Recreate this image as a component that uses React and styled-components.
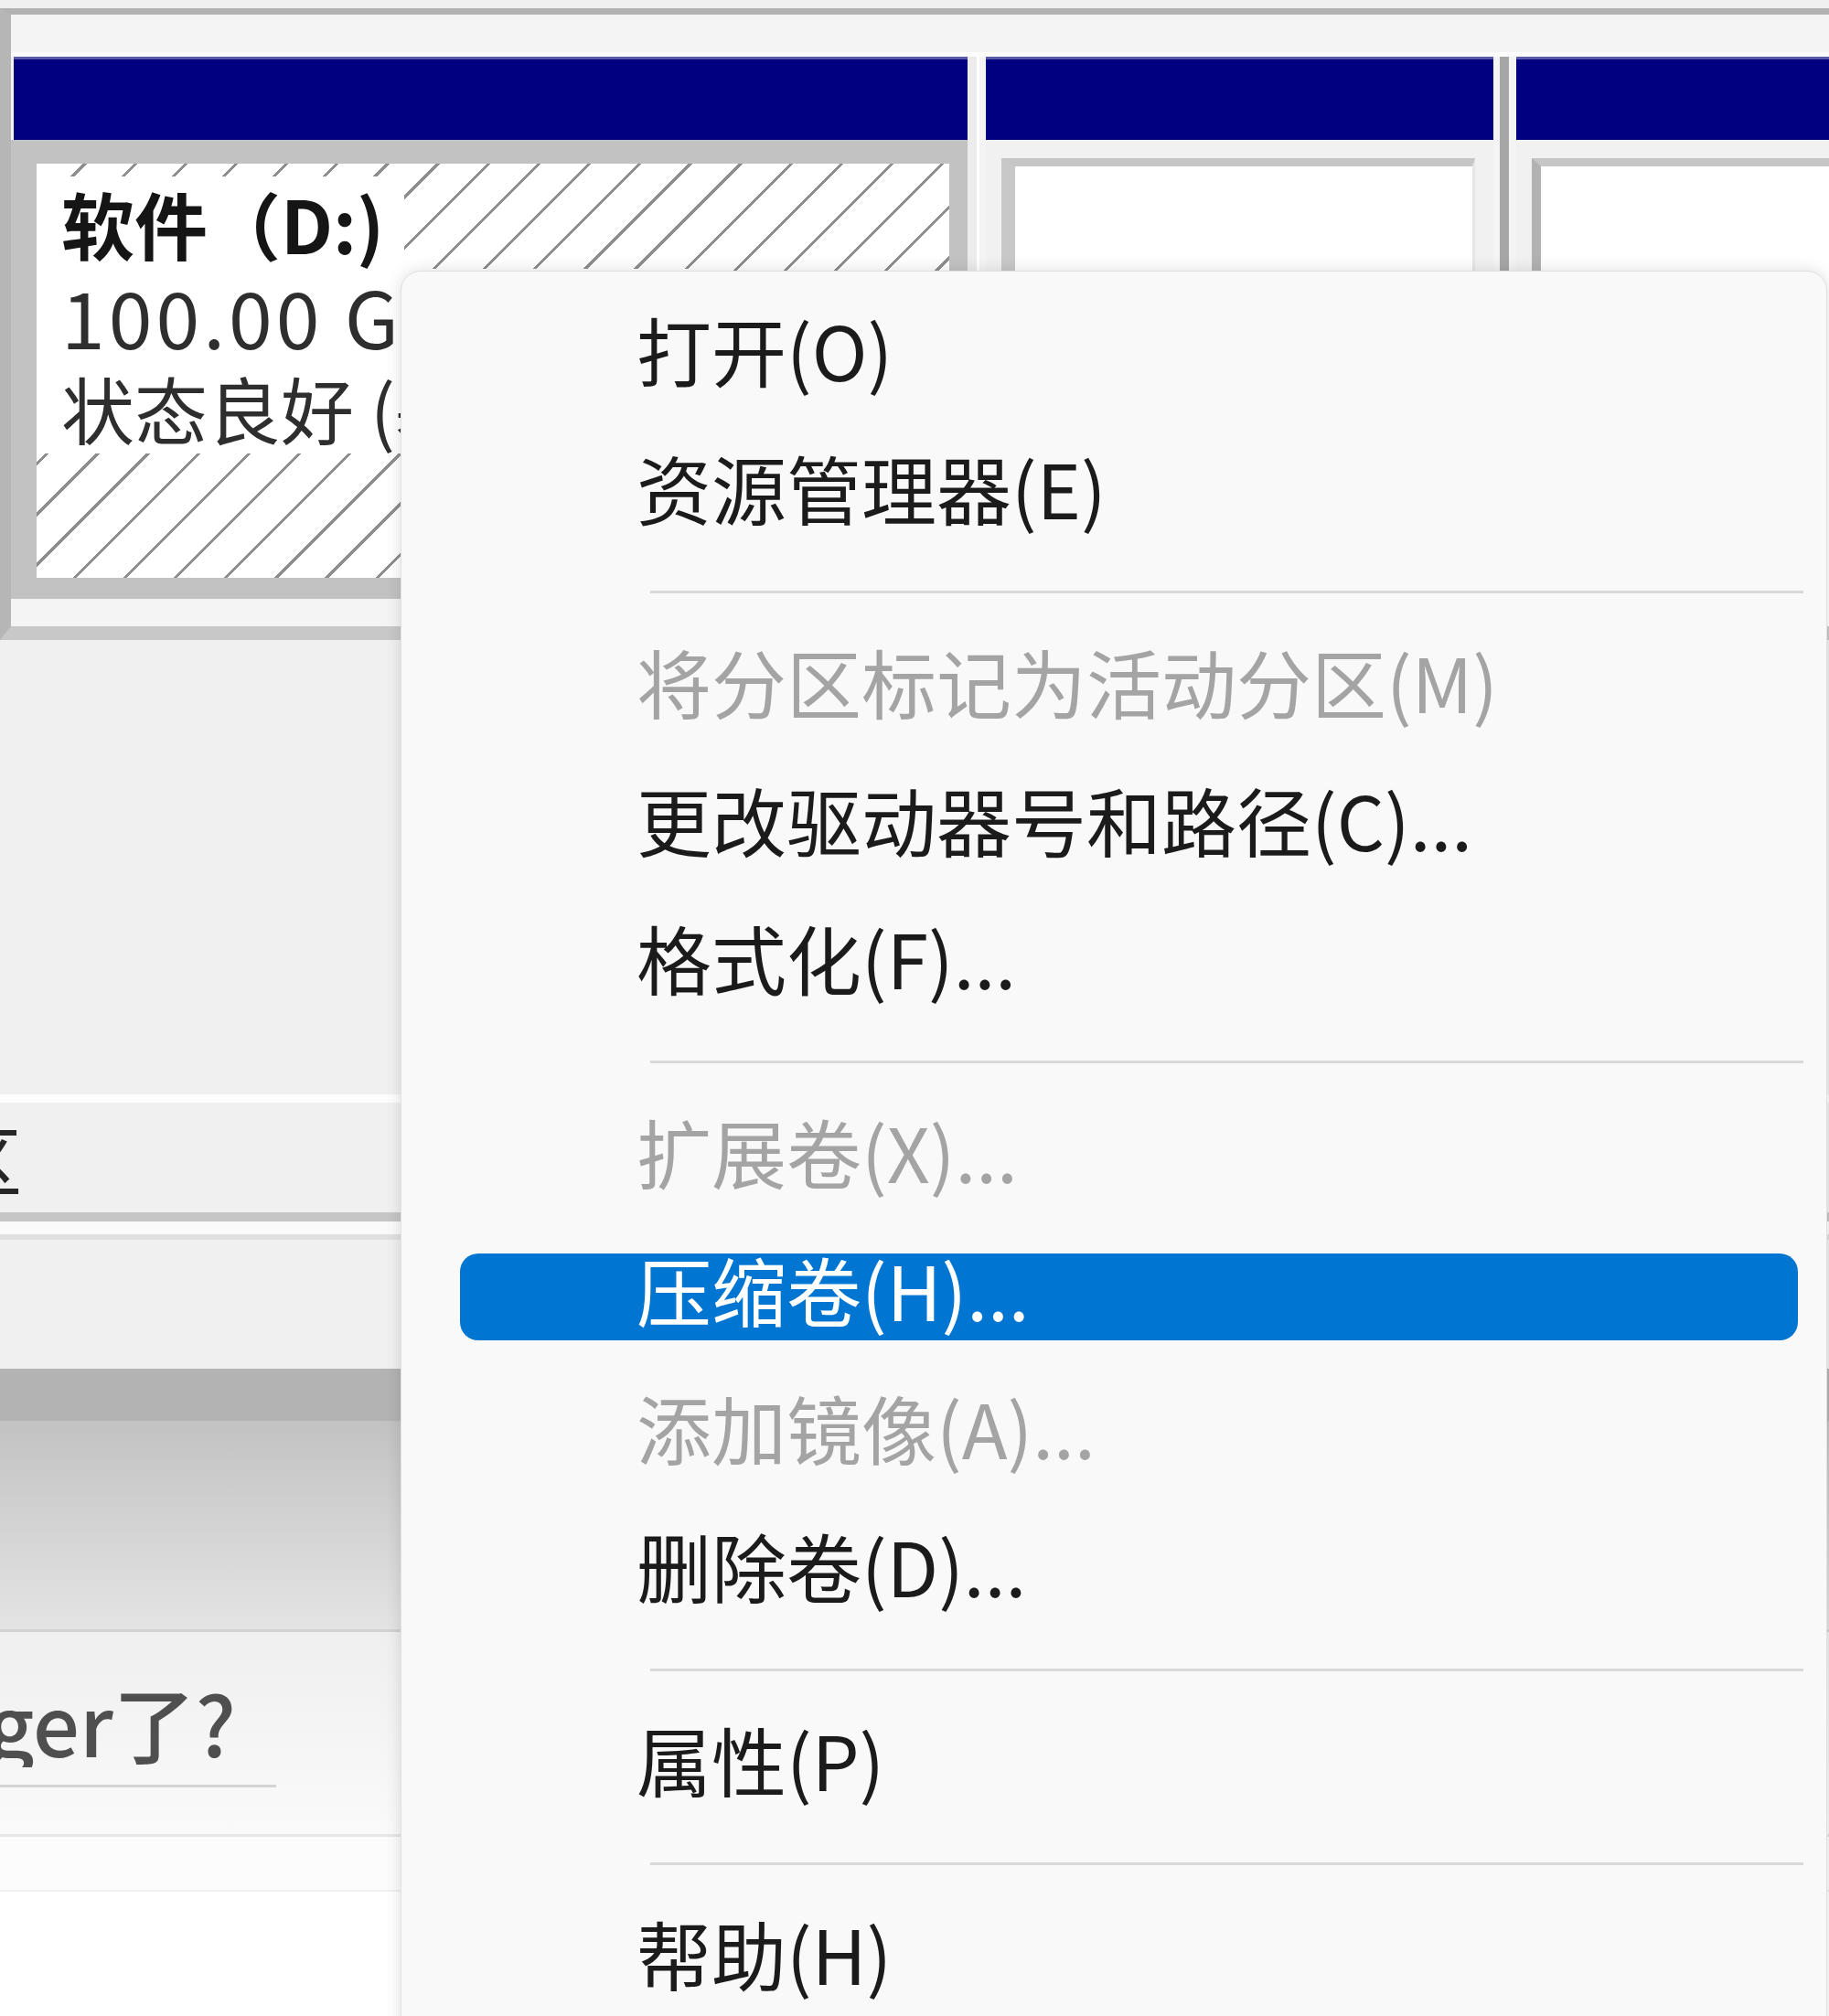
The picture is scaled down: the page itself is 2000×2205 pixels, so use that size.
import React from "react";
import styled, { createGlobalStyle } from "styled-components";

const Global = createGlobalStyle`
  html, body { margin: 0; padding: 0; overflow: hidden; background: #f0f0f0; }
  body { font-family: "Noto Sans CJK SC", "Noto Sans", sans-serif; }
  * { box-sizing: border-box; }
`;

const Screen = styled.div`
  position: relative;
  width: 2000px;
  height: 2205px;
  overflow: hidden;
  background: #f0f0f0;
  display: flex;
  flex-direction: column;
`;

const TopStrip = styled.div`
  height: 9px;
  flex-shrink: 0;
  background: #f0f0f0;
`;

const DiskArea = styled.div`
  flex-shrink: 0;
  border-top: 7px solid #b2b2b2;
  border-left: 12px solid #b6b6b6;
  border-bottom: 15px solid #c8c8c8;
  background: #f4f4f4;
  padding-top: 41px;
`;

const WhiteLine = styled.div`
  height: 5px;
  background: #fcfcfc;
`;

const PartitionRow = styled.div`
  display: flex;
  height: 623px;
`;

const Partition = styled.div`
  display: flex;
  flex-direction: column;
  width: ${(p) => (p.$width ? `${p.$width}px` : "auto")};
  flex: ${(p) => (p.$width ? "0 0 auto" : "1 1 auto")};
`;

const Header = styled.div`
  height: 91px;
  flex-shrink: 0;
  margin-left: ${(p) => p.$ml || 0}px;
  background: #000080;
  border-top: 3px solid #5a5aa8;
`;

const SelectedFrame = styled.div`
  height: 502px;
  border-style: solid;
  border-color: #c2c2c2;
  border-width: 26px 20px 23px 28px;
  background-color: #ffffff;
  background-image: repeating-linear-gradient(
    135deg,
    transparent 0px,
    transparent 36px,
    #8e8e8e 36px,
    #8e8e8e 39px
  );
  padding-top: 14px;
  display: flex;
  flex-direction: column;
  align-items: flex-start;
  overflow: hidden;
`;

const LabelLine = styled.div`
  background: #ffffff;
  white-space: nowrap;
  padding: 0 22px 0 27px;
  height: 101px;
  line-height: 101px;
  font-size: ${(p) => p.$size || 80}px;
  font-weight: ${(p) => (p.$bold ? 700 : 400)};
  color: ${(p) => (p.$bold ? "#151515" : "#2e2e2e")};
  letter-spacing: ${(p) => p.$ls || 0}px;
`;

const PlainBody = styled.div`
  flex: 1;
  display: flex;
  flex-direction: column;
  padding-top: 20px;
  background: #f1f1f1;
`;

const SunkenBox = styled.div`
  flex: 1;
  margin-left: 17px;
  margin-right: ${(p) => p.$mr || 0}px;
  background: #ffffff;
  border-top: 9px solid #c6c6c6;
  border-left: ${(p) => p.$bl || 15}px solid ${(p) => p.$blc || "#c8c8c8"};
  border-right: ${(p) => (p.$mr ? "3px solid #e6e6e6" : "none")};
`;

const GapSpacer = styled.div`
  width: 20px;
  flex-shrink: 0;
  background: linear-gradient(
    to right,
    #ececec 0px,
    #ececec 10px,
    #ffffff 10px,
    #ffffff 13px,
    #f4f4f4 13px
  );
`;

const Divider = styled.div`
  width: 25px;
  flex-shrink: 0;
  background: linear-gradient(
    to right,
    #f4f4f4 0px,
    #f4f4f4 7px,
    #a6a6a6 7px,
    #a6a6a6 17px,
    #f4f4f4 17px
  );
`;

const Band = styled.div`
  flex-shrink: 0;
  height: ${(p) => p.$h}px;
  background: ${(p) => p.$bg};
`;

const FragRow = styled.div`
  flex-shrink: 0;
  height: 120px;
  background: #f0f0f0;
  display: flex;
  align-items: center;
`;

const Clip = styled.div`
  display: flex;
  justify-content: flex-end;
  overflow: hidden;
  width: ${(p) => p.$w}px;
  flex-shrink: 0;
`;

const ClipText = styled.span`
  flex-shrink: 0;
  white-space: nowrap;
  font-size: ${(p) => p.$size}px;
  line-height: ${(p) => p.$lh || p.$size}px;
  color: ${(p) => p.$color};
  font-weight: ${(p) => p.$weight || 400};
`;

const ArticleRow = styled.div`
  flex-shrink: 0;
  height: 221px;
  background: linear-gradient(to bottom, #efefef, #fafafa);
  padding-top: 48px;
  display: flex;
  flex-direction: column;
`;

const Underline = styled.div`
  margin-top: 19px;
  width: 302px;
  height: 3px;
  background: #d4d4d4;
`;

const Fill = styled.div`
  flex: 1;
  background: #ffffff;
`;

const Menu = styled.div`
  position: absolute;
  left: 438px;
  top: 296px;
  width: 1560px;
  height: 2000px;
  background: #f9f9f9;
  border: 1px solid #e0e0e0;
  border-radius: 22px 22px 0 0;
  box-shadow: 0 0 18px rgba(0, 0, 0, 0.13);
  padding-top: 10px;
  display: flex;
  flex-direction: column;
`;

const MenuItem = styled.div`
  height: 151px;
  flex-shrink: 0;
  padding: 36px 31px 20px 64px;
`;

const Pill = styled.div`
  height: 95px;
  border-radius: 20px;
  background: ${(p) => (p.$active ? "#0075d1" : "transparent")};
  padding: 0 0 18px 193px;
  display: flex;
  align-items: center;
  white-space: nowrap;
  font-size: 82px;
  color: ${(p) => (p.$active ? "#ffffff" : p.$disabled ? "#a4a4a4" : "#1b1b1b")};
`;

const Separator = styled.div`
  flex-shrink: 0;
  padding: 37px 25px 21px 272px;
`;

const SepLine = styled.div`
  height: 3px;
  background: #d9d9d9;
`;

const menu = [
  { t: "打开(O)" },
  { t: "资源管理器(E)" },
  { sep: true },
  { t: "将分区标记为活动分区(M)", disabled: true },
  { t: "更改驱动器号和路径(C)..." },
  { t: "格式化(F)..." },
  { sep: true },
  { t: "扩展卷(X)...", disabled: true },
  { t: "压缩卷(H)...", active: true },
  { t: "添加镜像(A)...", disabled: true },
  { t: "删除卷(D)..." },
  { sep: true },
  { t: "属性(P)" },
  { sep: true },
  { t: "帮助(H)" },
];

export default function App() {
  return (
    <Screen>
      <Global />
      <TopStrip />
      <DiskArea>
        <WhiteLine />
        <PartitionRow>
          <Partition $width={1046}>
            <Header $ml={3} />
            <SelectedFrame>
              <LabelLine $bold>软件（D:)</LabelLine>
              <LabelLine $size={86} $ls={4}>100.00 GB NTFS</LabelLine>
              <LabelLine>状态良好 (基本数据分区)</LabelLine>
            </SelectedFrame>
          </Partition>
          <GapSpacer />
          <Partition $width={555}>
            <Header />
            <PlainBody>
              <SunkenBox $mr={20} />
            </PlainBody>
          </Partition>
          <Divider />
          <Partition>
            <Header />
            <PlainBody>
              <SunkenBox $bl={10} $blc="#b2b2b2" />
            </PlainBody>
          </Partition>
        </PartitionRow>
      </DiskArea>

      <Band $h={493} $bg="#f0f0f0" />
      <Band $h={13} $bg="linear-gradient(#f0f0f0 0 4px, #fdfdfd 4px)" />
      <FragRow>
        <Clip $w={24}>
          <ClipText $size={82} $color="#262626">分区</ClipText>
        </Clip>
      </FragRow>
      <Band $h={10} $bg="#c6c6c6" />
      <Band $h={20} $bg="linear-gradient(#fafafa 0 14px, #e0e0e0 14px)" />
      <Band $h={141} $bg="#f0f0f0" />
      <Band $h={57} $bg="#b3b3b3" />
      <Band $h={228} $bg="linear-gradient(to bottom, #c2c2c2, #e4e4e4)" />
      <Band $h={3} $bg="#d2d2d2" />
      <ArticleRow>
        <Clip $w={258}>
          <ClipText $size={90} $lh={100} $color="#4f4f4f" $weight={500}>
            Disk Manager了?
          </ClipText>
        </Clip>
        <Underline />
      </ArticleRow>
      <Band $h={3} $bg="#e6e6e6" />
      <Band $h={58} $bg="#fcfcfc" />
      <Band $h={2} $bg="#efefef" />
      <Fill />

      <Menu>
        {menu.map((m, i) =>
          m.sep ? (
            <Separator key={i}>
              <SepLine />
            </Separator>
          ) : (
            <MenuItem key={i}>
              <Pill $active={m.active} $disabled={m.disabled}>
                {m.t}
              </Pill>
            </MenuItem>
          )
        )}
      </Menu>
    </Screen>
  );
}
